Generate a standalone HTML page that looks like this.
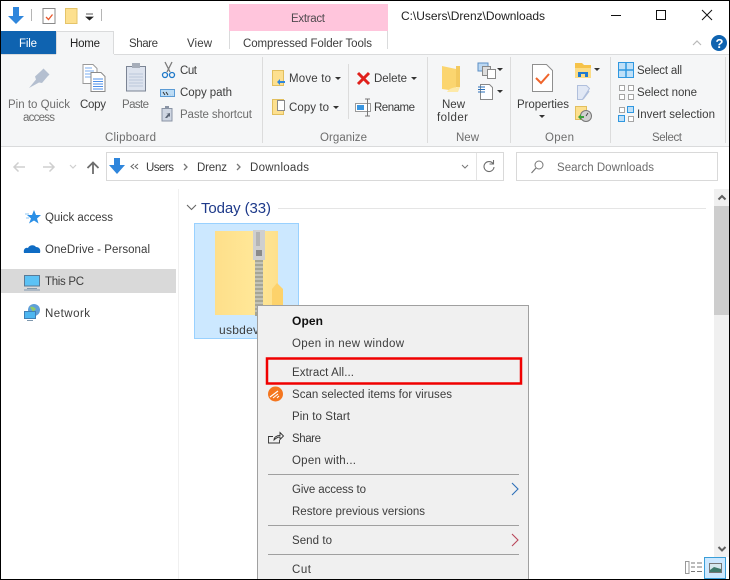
<!DOCTYPE html>
<html><head><meta charset="utf-8">
<style>
html,body{margin:0;padding:0;background:#fff;width:730px;height:580px;overflow:hidden}
svg{display:block;position:absolute;left:0;top:0}
text{font-family:"Liberation Sans",sans-serif;font-size:11.5px;fill:#222}
.g{fill:#6d6d6d}.d{fill:#3c3c3c}
</style></head><body>
<svg width="730" height="580" viewBox="0 0 730 580" xmlns="http://www.w3.org/2000/svg">
<defs><linearGradient id="fg" x1="0" x2="1" y1="0" y2="0"><stop offset="0" stop-color="#fedf8a"/><stop offset=".6" stop-color="#ffe797"/><stop offset="1" stop-color="#fee08c"/></linearGradient></defs>
<rect width="730" height="580" fill="#fff"/>
<!-- title bar -->
<rect x="229" y="4" width="159" height="27" fill="#ffc5dc"/>
<text x="291" y="22" textLength="34" style="fill:#4f4a4e">Extract</text>
<text x="401" y="20" textLength="144" style="font-size:12px">C:\Users\Drenz\Downloads</text>
<path d="M13 7h6v9h5l-8 8-8-8h5z" fill="#2f86dc"/>
<rect x="31" y="9" width="1" height="12" fill="#b5b5b5"/>
<rect x="43" y="8.500" width="12" height="15" fill="#fff" stroke="#8a8a8a"/>
<path d="M46 17l2.500 2.500 4-5" fill="none" stroke="#e8562a" stroke-width="1.300"/>
<rect x="65.500" y="8.500" width="11.500" height="15" fill="#fde08f" stroke="#e5c468"/>
<path d="M86 14h7M86 17h7l-3.500 3z" fill="#222" stroke="#222" stroke-width=".7"/>
<rect x="101" y="9" width="1" height="12" fill="#b5b5b5"/>
<!-- window buttons -->
<rect x="611" y="15" width="10" height="1" fill="#111"/>
<rect x="656.500" y="10.500" width="9" height="9" fill="none" stroke="#111"/>
<path d="M702 10l10 10M712 10l-10 10" stroke="#111" fill="none"/>
<!-- tabs -->
<rect x="1" y="31" width="55" height="23" fill="#0f63b0"/>
<text x="19" y="47" textLength="18" style="fill:#fff">File</text>
<path d="M56.500 54V31.500H113.500V54" fill="#f5f6f7" stroke="#dadbdc"/>
<text x="70" y="47" textLength="30">Home</text>
<text x="129" y="47" textLength="29" class="d">Share</text>
<text x="187" y="47" textLength="25" class="d">View</text>
<rect x="229" y="31" width="1" height="18" fill="#dadbdc"/>
<rect x="387" y="31" width="1" height="18" fill="#dadbdc"/>
<text x="243" y="47" textLength="129" class="d">Compressed Folder Tools</text>
<path d="M693 45l4-4 4 4" fill="none" stroke="#b9b9b9" stroke-width="1.200"/>
<circle cx="719" cy="43" r="8" fill="#0f63b0"/>
<text x="715.500" y="48" style="fill:#fff;font-weight:700;font-size:13px">?</text>
<!-- ribbon -->
<rect x="1" y="54" width="728" height="92" fill="#f5f6f7"/>
<rect x="114" y="54" width="615" height="1" fill="#dadbdc"/>
<rect x="1" y="54" width="55" height="1" fill="#dadbdc"/>
<rect x="1" y="146" width="728" height="1" fill="#dadbdc"/>
<rect x="262" y="57" width="1" height="86" fill="#dcdcdc"/>
<rect x="348" y="64" width="1" height="55" fill="#dcdcdc"/>
<rect x="427" y="57" width="1" height="86" fill="#dcdcdc"/>
<rect x="510" y="57" width="1" height="86" fill="#dcdcdc"/>
<rect x="610" y="57" width="1" height="86" fill="#dcdcdc"/>
<rect x="725" y="57" width="1" height="86" fill="#dcdcdc"/>
<!-- clipboard -->
<path d="M29 88l7-8.500-1-3 6-5.500 2.500-2.500 6 6-2 2-5.500 6.500-3-.5z" fill="#b4bfd0"/>
<path d="M83 64.500h10l4 4v15H83z" fill="#fff" stroke="#9a9a9a"/>
<path d="M85 68h7M85 71h9M85 74h9M85 77h9" stroke="#79aef0"/>
<path d="M91 72.500h10l4 4v15H91z" fill="#fff" stroke="#8a8a8a"/>
<path d="M93 79h10M93 81.500h10M93 84h10M93 86.500h10M93 89h10" stroke="#4d8fe8"/>
<rect x="126.500" y="66.500" width="19" height="24.500" fill="#dde3ee" stroke="#7b8494"/>
<rect x="132" y="63" width="8" height="5" fill="#a6adb9"/>
<path d="M129 74h14M129 77h14M129 80h14M129 83h14M129 86h14" stroke="#bcc7da"/>
<path d="M165 62l5 10M172 62l-5 10" stroke="#7c7c7c" stroke-width="1.300"/>
<circle cx="165" cy="75" r="2.500" fill="none" stroke="#1e78c8" stroke-width="1.300"/>
<circle cx="172" cy="75" r="2.500" fill="none" stroke="#1e78c8" stroke-width="1.300"/>
<rect x="160.500" y="89.500" width="14" height="7" fill="#bddcf5" stroke="#5b9bd5"/>
<path d="M163 92l2 3M166 92l2 3M170 95h.1M172 95h.1" stroke="#333"/>
<rect x="162" y="108.500" width="10" height="12.500" fill="#cfd6e2" stroke="#8a94a5"/>
<rect x="165" y="106" width="4" height="3" fill="#8a94a5"/>
<path d="M165 118l3-4h-2l4-1v4l-1-1-2 2z" fill="#5b6575"/>
<text x="8" y="108" textLength="62" class="g">Pin to Quick</text>
<text x="23" y="121" textLength="32" class="g">access</text>
<text x="80" y="108" textLength="26" class="d">Copy</text>
<text x="122" y="108" textLength="27" class="g">Paste</text>
<text x="180" y="74" textLength="17" class="d">Cut</text>
<text x="180" y="96" textLength="52" class="d">Copy path</text>
<text x="180" y="118" textLength="72" class="g">Paste shortcut</text>
<text x="105" y="141" textLength="51" class="g">Clipboard</text>
<!-- organize -->
<rect x="272.500" y="70.500" width="11" height="15" fill="#fde08f" stroke="#e2bf5e"/>
<path d="M277 82l3-3v2h5v2h-5v2z" fill="#2f86dc"/>
<rect x="272.500" y="99.500" width="11" height="15" fill="#fde08f" stroke="#e2bf5e"/>
<rect x="277.500" y="100.500" width="7" height="10" fill="#fff" stroke="#8a8a8a"/>
<path d="M358 73l11 11M369 73l-11 11" stroke="#e0201b" stroke-width="3"/>
<rect x="355.500" y="103.500" width="15" height="8" fill="#fff" stroke="#999"/>
<rect x="357" y="105" width="7" height="5" fill="#3a96e0"/>
<path d="M367.500 99v17M365 99h5M365 116h5" stroke="#777" fill="none"/>
<text x="289" y="82" textLength="42" class="d">Move to</text>
<path d="M335 77h6l-3 3z" fill="#333"/>
<text x="289" y="111" textLength="40" class="d">Copy to</text>
<path d="M333 106h6l-3 3z" fill="#333"/>
<text x="374" y="82" textLength="33" class="d">Delete</text>
<path d="M411 77h6l-3 3z" fill="#333"/>
<text x="374" y="111" textLength="41" class="d">Rename</text>
<text x="320" y="141" textLength="47" class="g">Organize</text>
<!-- new -->
<path d="M442 66l14 3v22l-14-2v-3z" fill="#fbd56f"/>
<path d="M456 66h4v21h-4z" fill="#f3c95f"/>
<path d="M447 92c2-4 8-5 13-5l-2 5z" fill="#fde9a8"/>
<rect x="478" y="63" width="10" height="8" fill="#bcd8f2" stroke="#5b8fc5"/>
<rect x="482.500" y="66.500" width="8" height="9" fill="#ddd" stroke="#888"/>
<rect x="487.500" y="69.500" width="8" height="9" fill="#fff" stroke="#888"/>
<path d="M497 68h6l-3 3z" fill="#333"/>
<path d="M480.500 84.500h9l3 3v12h-12z" fill="#fff" stroke="#888"/>
<path d="M478 87h7M478 89.500h7M478 92h7" stroke="#2a6fb8"/>
<path d="M497 90h6l-3 3z" fill="#333"/>
<text x="442" y="108" textLength="23" class="d">New</text>
<text x="437" y="121" textLength="31" class="d">folder</text>
<text x="456" y="141" textLength="23" class="g">New</text>
<!-- open -->
<path d="M532.500 64.500h14l6 6v21h-20z" fill="#fff" stroke="#8f8f8f"/>
<path d="M536 78l5 5 8-9" fill="none" stroke="#f0642a" stroke-width="2"/>
<path d="M575 63h7l2 2h7v13h-16z" fill="#f6c34a"/>
<path d="M575 68h16v10h-16z" fill="#fbdc86"/>
<path d="M578 77v-5h10v5h-3v-3h-4v3z" fill="#1f7ad1"/>
<path d="M594 68h6l-3 3z" fill="#333"/>
<path d="M577.500 85.500h9l3 3-7 11h-5z" fill="#e1e8f5" stroke="#b0bfdc"/>
<path d="M583 99l6-8" stroke="#b0bfdc" stroke-width="1.500"/>
<rect x="575.500" y="106.500" width="11" height="13" fill="#fde08f" stroke="#e2bf5e"/>
<circle cx="586" cy="116" r="5.500" fill="#d0d0d0" stroke="#777"/>
<path d="M586 116l2-3" stroke="#444"/>
<path d="M578 117l3-3v2h3v2h-3v2z" fill="#3aa03a"/>
<text x="517" y="108" textLength="52" class="d">Properties</text>
<path d="M539 115h6l-3 3z" fill="#333"/>
<text x="545" y="141" textLength="29" class="g">Open</text>
<!-- select -->
<rect x="618.500" y="62.500" width="15" height="15" fill="#bfe0f8" stroke="#2f97e0"/>
<path d="M626 62v16M618 70h16" stroke="#2f97e0" stroke-width="1.500"/>
<g fill="#fff" stroke="#a5a5a5"><rect x="619.500" y="85.500" width="5" height="5"/><rect x="628.500" y="85.500" width="5" height="5"/><rect x="619.500" y="94.500" width="5" height="5"/><rect x="628.500" y="94.500" width="5" height="5"/></g>
<rect x="619.500" y="107.500" width="5" height="5" fill="#fff" stroke="#a5a5a5"/>
<rect x="627.500" y="106.500" width="6" height="6" fill="#bfe0f8" stroke="#2f97e0"/>
<rect x="618.500" y="115.500" width="6" height="6" fill="#bfe0f8" stroke="#2f97e0"/>
<rect x="628.500" y="116.500" width="5" height="5" fill="#fff" stroke="#a5a5a5"/>
<text x="637" y="74" textLength="45" class="d">Select all</text>
<text x="637" y="96" textLength="60" class="d">Select none</text>
<text x="637" y="118" textLength="78" class="d">Invert selection</text>
<text x="652" y="141" textLength="30" class="g">Select</text>
<!-- nav -->
<path d="M25 167H14M18.500 162.500L14 167l4.500 4.500" fill="none" stroke="#cfcfcf" stroke-width="1.500"/>
<path d="M43 167h11M49.500 162.500L54 167l-4.500 4.500" fill="none" stroke="#cfcfcf" stroke-width="1.500"/>
<path d="M70 165l3 3 3-3" fill="none" stroke="#cfcfcf" stroke-width="1.200"/>
<path d="M93 174V163M87.500 168L93 162.500l5.500 5.500" fill="none" stroke="#6d6d6d" stroke-width="1.800"/>
<rect x="106.500" y="152.500" width="397" height="28" fill="#fff" stroke="#d9d9d9"/>
<path d="M114 158h6v7h5l-8 9-8-9h5z" fill="#2f86dc"/>
<path d="M134 164l-3 2.500 3 2.500M138 164l-3 2.500 3 2.500" fill="none" stroke="#666"/>
<text x="146" y="171" textLength="28" class="d">Users</text>
<path d="M184 164l3 3-3 3" fill="none" stroke="#777" stroke-width="1.300"/>
<text x="197" y="171" textLength="30" class="d">Drenz</text>
<path d="M237 164l3 3-3 3" fill="none" stroke="#777" stroke-width="1.300"/>
<text x="250" y="171" textLength="59" class="d">Downloads</text>
<path d="M462 165l3 3 3-3" fill="none" stroke="#777"/>
<rect x="476" y="153" width="1" height="27" fill="#e3e3e3"/>
<path d="M493 163.500a5 5 0 1 0 1 3.500M493.500 160v4h-4" fill="none" stroke="#6d6d6d" stroke-width="1.100"/>
<rect x="516.500" y="152.500" width="201" height="28" fill="#fff" stroke="#d9d9d9"/>
<circle cx="539" cy="165" r="4" fill="none" stroke="#777"/>
<path d="M536 168l-4.500 5" stroke="#777" stroke-width="1.200"/>
<text x="557" y="171" textLength="97" class="g">Search Downloads</text>
<!-- nav pane -->
<rect x="178" y="189" width="1" height="390" fill="#f0f0f0"/>
<rect x="1" y="269" width="175" height="24" fill="#d9d9d9"/>
<path d="M34 210l2 5h5l-4 3.500 1.500 5-4.500-3-5 3 2-5-4-3.500h5z" fill="#2a8fe6"/>
<path d="M25 214h4M26 218h3" stroke="#8cc4f2"/>
<path d="M24 253c-1-4 2-6 4-5 1-3 6-4 8-1 3 0 5 2 4 6z" fill="#0f6cc4"/>
<rect x="24.500" y="275.500" width="15" height="10.500" fill="#5cc2f5" stroke="#5a7a96"/>
<path d="M27 288.500h10" stroke="#7f98ae" stroke-width="1"/><path d="M24 290h16" stroke="#7f98ae"/>
<circle cx="34" cy="310" r="6" fill="#5e9fd8"/>
<path d="M30 307c2-1 4 0 6 2l-3 3z" fill="#8fc96a"/>
<rect x="24.500" y="311.500" width="11" height="7" fill="#4db6f0" stroke="#3f7fb5"/>
<path d="M27 320.500h6" stroke="#7f98ae"/>
<text x="45" y="221" textLength="68" class="d">Quick access</text>
<text x="45" y="253" textLength="105" class="d">OneDrive - Personal</text>
<text x="45" y="285" textLength="39" class="d">This PC</text>
<text x="45" y="317" textLength="45" class="d">Network</text>
<!-- content -->
<path d="M187 205l4.500 4.500 4.500-4.500" fill="none" stroke="#666" stroke-width="1.100"/>
<text x="201" y="213" textLength="70" style="font-size:15px;fill:#1e3a8a">Today (33)</text>
<rect x="278" y="208" width="428" height="1" fill="#e5e5e5"/>
<rect x="194.500" y="223.500" width="104" height="115" fill="#cce8ff" stroke="#99d1ff"/>
<rect x="215" y="231" width="63" height="84" fill="url(#fg)"/>
<path d="M272 305v-16l5-6 6 6v26h-11z" fill="#fdd26b"/>
<rect x="253" y="230" width="12" height="30" fill="#cfcfcf"/>
<rect x="256" y="232" width="4" height="14" fill="#b4b4b4"/>
<rect x="256" y="250" width="6" height="6" fill="#8a8a8a"/>
<rect x="255" y="260" width="8" height="56" fill="#a5a596"/>
<path d="M255 263h8M255 267h8M255 271h8M255 275h8M255 279h8M255 283h8M255 287h8M255 291h8M255 295h8M255 299h8M255 303h8M255 307h8M255 311h8" stroke="#dedfd5"/>
<text x="219" y="334" textLength="40" class="d" style="font-size:12px">usbdev</text>
<!-- scrollbar -->
<rect x="714" y="189" width="15" height="368" fill="#f0f0f0"/>
<rect x="714" y="206" width="15" height="109" fill="#cdcdcd"/>
<path d="M718.500 199.500l3.500-3.500 3.500 3.500" fill="none" stroke="#606060" stroke-width="2"/>
<path d="M718.500 547l3.500 3.500 3.500-3.500" fill="none" stroke="#606060" stroke-width="2"/>
<!-- view toggles -->
<rect x="685.500" y="561.500" width="3.500" height="12" fill="#fff" stroke="#999"/>
<path d="M691 563h4M697 563h5M691 567h4M697 567h5M691 571.500h4M697 571.500h5" stroke="#777"/>
<rect x="704.500" y="557.500" width="21" height="21" fill="#cce8ff" stroke="#3a9ed8"/>
<rect x="709.500" y="563.500" width="12" height="9" fill="#d5e8ee" stroke="#777"/>
<path d="M710 570l4-3 7 2v3h-11z" fill="#3e7a6c"/>
<!-- menu -->
<rect x="257.500" y="305.500" width="271" height="274" fill="#f0f0f0" stroke="#a0a0a0"/>
<text x="292" y="325" textLength="31" style="font-weight:700;fill:#111;font-size:12px">Open</text>
<text x="292" y="347" textLength="112" class="d">Open in new window</text>
<text x="292" y="376" textLength="62" class="d">Extract All...</text>
<circle cx="275.500" cy="394" r="7.500" fill="#f4761f"/>
<path d="M270 397l8-6M273 398l5-4M277 398l2-2" stroke="#fff" stroke-width="1.100" fill="none"/>
<text x="292" y="398" textLength="160" class="d">Scan selected items for viruses</text>
<text x="292" y="420" textLength="58" class="d">Pin to Start</text>
<path d="M273 436.500h-4.500v6.500h11v-3M274 440c0-3 3-4.500 6-4.500v-3l3.500 3.500-3.500 3.500v-2.500c-2 0-4 1-6 3z" fill="none" stroke="#333" stroke-width=".9"/>
<text x="292" y="442" textLength="29" class="d">Share</text>
<text x="292" y="464" textLength="64" class="d">Open with...</text>
<rect x="268" y="474" width="251" height="1" fill="#a0a0a0"/>
<text x="292" y="493" textLength="74" class="d">Give access to</text>
<path d="M512 483l6 6-6 6" fill="none" stroke="#2e70b8" stroke-width="1.100"/>
<text x="292" y="515" textLength="133" class="d">Restore previous versions</text>
<rect x="268" y="525" width="251" height="1" fill="#a0a0a0"/>
<text x="292" y="544" textLength="40" class="d">Send to</text>
<path d="M512 534l6 6-6 6" fill="none" stroke="#b8475a" stroke-width="1.100"/>
<rect x="268" y="554" width="251" height="1" fill="#a0a0a0"/>
<text x="292" y="573" textLength="19" class="d">Cut</text>
<rect x="267" y="358.500" width="254" height="25" fill="none" stroke="#f00000" stroke-width="2.500"/>
<!-- window border -->
<rect x="0" y="0" width="730" height="1" fill="#000"/>
<rect x="0" y="0" width="1" height="580" fill="#000"/>
<rect x="729" y="0" width="1" height="580" fill="#000"/>
<rect x="0" y="579" width="730" height="1" fill="#000"/>
</svg>
</body></html>
